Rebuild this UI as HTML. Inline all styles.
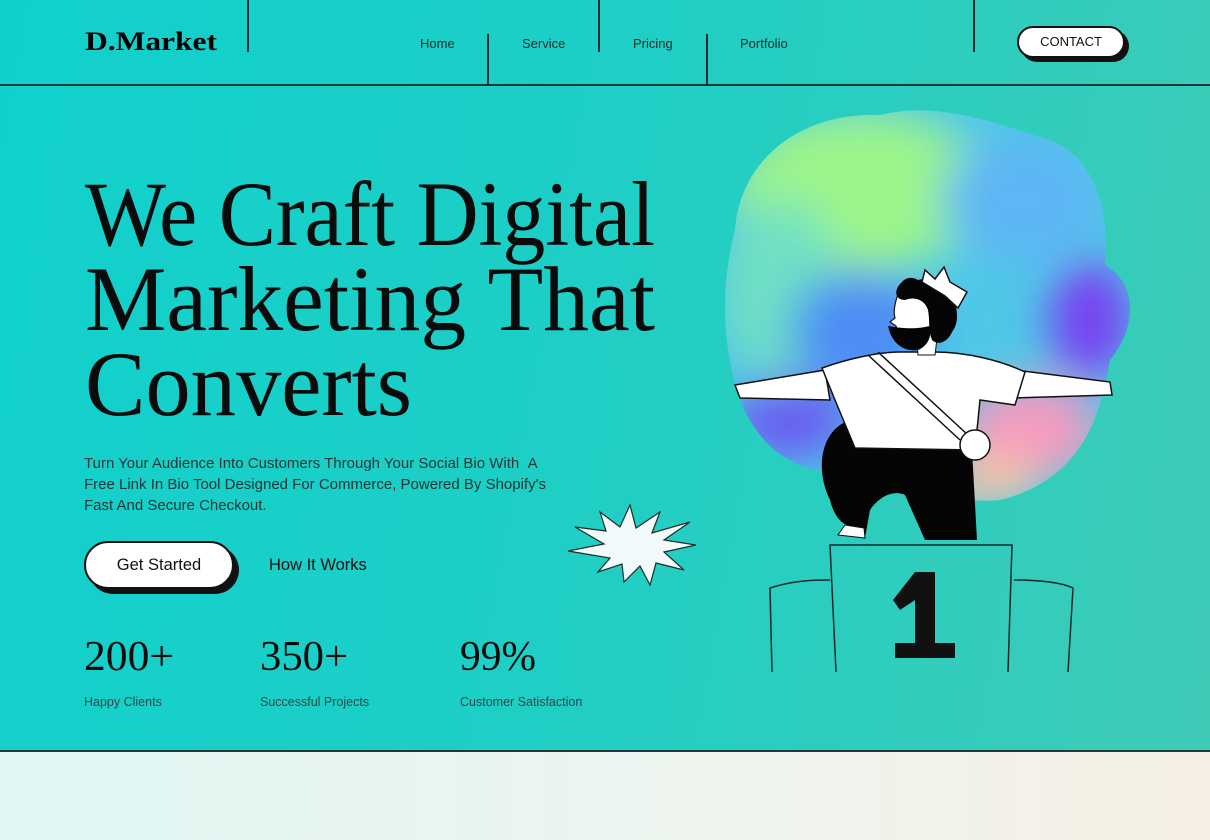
<!DOCTYPE html>
<html><head><meta charset="utf-8"><style>
*{margin:0;padding:0;box-sizing:border-box}
body{width:1210px;height:840px;overflow:hidden;position:relative;font-family:"Liberation Sans",sans-serif;color:#111;
background:linear-gradient(100deg,#11d0cc 0%,#1dcfc6 45%,#3fcbb6 100%)}
.a{position:absolute}
.vl{position:absolute;width:2px;background:#1a2a2a}
.nav{position:absolute;top:36px;font-size:13px;color:#1b2b2b}
.sub{font-size:15px;line-height:21px;color:#1d3535;letter-spacing:0px;white-space:nowrap}
.lab{font-size:12.5px;color:#2a4848;top:695px}
</style></head><body>
<div class="a" style="left:0;top:752px;width:1210px;height:88px;background:linear-gradient(90deg,#dff6f4,#eef4ee 60%,#f6efe4)"></div>
<div class="a" style="left:0;top:750px;width:1210px;height:2px;background:#1f3a38"></div>
<div class="a" style="left:0;top:84px;width:1210px;height:2px;background:#1f3a38"></div>
<div class="vl" style="left:247px;top:0;height:52px"></div>
<div class="vl" style="left:487px;top:34px;height:51px"></div>
<div class="vl" style="left:598px;top:0;height:52px"></div>
<div class="vl" style="left:706px;top:34px;height:51px"></div>
<div class="vl" style="left:973px;top:0;height:52px"></div>
<svg class="a" style="left:0;top:0" width="240" height="70"><text x="85" y="50" font-family="Liberation Serif, serif" font-weight="bold" font-size="26" textLength="132" lengthAdjust="spacingAndGlyphs">D.Market</text></svg>
<div class="nav" style="left:420px">Home</div>
<div class="nav" style="left:522px">Service</div>
<div class="nav" style="left:633px">Pricing</div>
<div class="nav" style="left:740px">Portfolio</div>
<div class="a" style="left:1021px;top:30px;width:108px;height:32px;border-radius:16px;background:#111"></div>
<div class="a" style="left:1017px;top:26px;width:108px;height:32px;border-radius:16px;background:#fff;border:2px solid #111;font-size:13px;text-align:center;line-height:28px">CONTACT</div>

<svg class="a" style="left:0;top:0" width="700" height="720">
<g font-family="Liberation Serif, serif" fill="#0b0b0b">
<text x="85" y="245" font-size="92" textLength="570" lengthAdjust="spacingAndGlyphs">We Craft Digital</text>
<text x="85" y="330" font-size="92" textLength="570" lengthAdjust="spacingAndGlyphs">Marketing That</text>
<text x="85" y="415" font-size="92" textLength="327" lengthAdjust="spacingAndGlyphs">Converts</text>
<text x="84" y="670" font-size="42" textLength="90" lengthAdjust="spacingAndGlyphs">200+</text>
<text x="260" y="670" font-size="42" textLength="88" lengthAdjust="spacingAndGlyphs">350+</text>
<text x="460" y="670" font-size="42" textLength="76" lengthAdjust="spacingAndGlyphs">99%</text>
</g>
<polygon points="630,505 636,528 660,512 652,533 690,522 664,540 696,545 664,552 684,570 656,563 650,585 640,566 624,582 622,564 598,572 610,558 568,551 604,544 575,527 606,531 600,512 620,527" fill="#f2f9fb" stroke="#1a2a2a" stroke-width="1.2"/>
</svg>
<div class="a sub" style="left:84px;top:453px">Turn Your Audience Into Customers Through Your Social Bio With &nbsp;A<br>Free Link In Bio Tool Designed For Commerce, Powered By Shopify's<br>Fast And Secure Checkout.</div>
<div class="a" style="left:89px;top:546px;width:150px;height:48px;border-radius:24px;background:#111"></div>
<div class="a" style="left:84px;top:541px;width:150px;height:48px;border-radius:24px;background:#fff;border:2px solid #111;font-size:16.5px;text-align:center;line-height:44px">Get Started</div>
<div class="a" style="left:269px;top:556px;font-size:16.5px">How It Works</div>
<div class="a lab" style="left:84px">Happy Clients</div>
<div class="a lab" style="left:260px">Successful Projects</div>
<div class="a lab" style="left:460px">Customer Satisfaction</div>

<svg class="a" style="left:700px;top:90px" width="500" height="620" viewBox="700 90 500 620">
<defs>
<filter id="b" x="-30%" y="-30%" width="160%" height="160%"><feGaussianBlur stdDeviation="22"/></filter>
<clipPath id="c"><path d="M735,230 C740,160 800,112 880,115 C940,100 1000,125 1050,140 C1100,160 1110,220 1105,265 C1140,285 1135,330 1110,360 C1100,420 1080,480 1000,500 C950,505 900,480 860,470 C800,480 760,450 740,400 C720,340 722,280 735,230Z"/></clipPath>
</defs>
<g clip-path="url(#c)">
<rect x="700" y="90" width="480" height="440" fill="#4fc7e8"/>
<g filter="url(#b)">
<ellipse cx="860" cy="190" rx="130" ry="80" fill="#9cf58a"/>
<ellipse cx="780" cy="290" rx="60" ry="90" fill="#6fe0c4"/>
<ellipse cx="1020" cy="200" rx="80" ry="60" fill="#5fb5f5"/>
<ellipse cx="860" cy="330" rx="70" ry="60" fill="#4d8df5"/>
<ellipse cx="1090" cy="320" rx="40" ry="60" fill="#7a3cf2"/>
<ellipse cx="790" cy="420" rx="60" ry="40" fill="#6a5cf2"/>
<ellipse cx="1030" cy="430" rx="70" ry="50" fill="#f59bc0"/>
<ellipse cx="990" cy="480" rx="50" ry="25" fill="#f8c8a0"/>
</g>
</g>
<g fill="none" stroke="#1a2a2a" stroke-width="1.5">
<path d="M772,672 L770,588 C795,580 815,580 830,580"/>
<path d="M1014,580 C1040,580 1060,582 1073,588 L1068,672"/>
<path d="M836,672 L830,545 L1012,545 L1008,672"/>
</g>
<path d="M893,600 L915,572 L935,572 L935,643 L955,643 L955,658 L895,658 L895,643 L915,643 L915,600 L900,610Z" fill="#111"/>
<path d="M850,420 C820,430 815,470 830,500 C835,520 845,525 848,525 L838,535 L865,538 L870,510 C880,495 895,490 905,495 L925,540 L977,540 L972,450 C930,440 880,420 850,420Z" fill="#050505"/>
<path d="M838,535 L865,538 L864,528 L845,525Z" fill="#fff" stroke="#111"/>
<path d="M735,385 L825,370 L830,400 L740,398Z" fill="#fff" stroke="#111" stroke-width="1.5"/>
<path d="M1015,370 L1110,382 L1112,395 L1012,398Z" fill="#fff" stroke="#111" stroke-width="1.5"/>
<path d="M822,368 C850,358 880,352 900,352 L935,352 C965,352 1000,360 1025,372 L1015,405 L980,400 L975,450 L855,448 L835,400Z" fill="#fff" stroke="#111" stroke-width="1.5"/>
<path d="M868,355 L960,440 M878,352 L968,435" stroke="#111" stroke-width="1.5"/>
<circle cx="975" cy="445" r="15" fill="#fff" stroke="#111" stroke-width="1.5"/>
<path d="M916,330 L918,355 L935,355 L938,330Z" fill="#fff" stroke="#111"/>
<path d="M900,290 C895,300 893,312 895,318 L890,322 L896,326 C898,335 905,340 915,338 L930,330 L935,300Z" fill="#fff" stroke="#111" stroke-width="1.2"/>
<path d="M902,282 C893,290 895,300 905,300 C915,296 925,300 928,310 C930,320 928,330 932,340 C938,346 948,342 952,332 C960,322 958,305 950,295 C945,284 930,276 918,280 C912,276 905,278 902,282Z" fill="#050505"/>
<path d="M888,326 C892,345 905,352 918,350 C928,346 932,336 930,326 C920,328 910,330 888,326Z" fill="#050505"/>
<path d="M922,282 L925,270 L935,279 L944,267 L950,282 L967,292 L958,308 L945,296 Z" fill="#fff" stroke="#111" stroke-width="1.5"/>
</svg>
</body></html>
